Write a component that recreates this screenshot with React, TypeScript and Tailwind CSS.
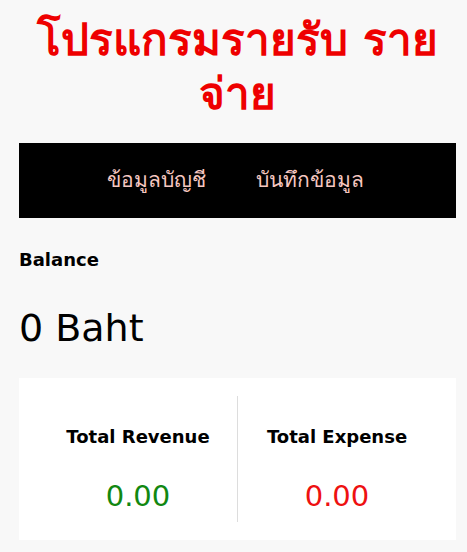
export default function App() {
  return (
    <div className="min-h-[552px] w-full bg-[#f8f8f8] font-['DejaVu_Sans','Noto_Sans',sans-serif]">
      <div className="ml-[19px] w-[437px] pt-[13px]">
        <h1 className="text-center text-[44px] font-bold leading-[54px] text-[#ee0000]">
          โปรแกรมรายรับ รายจ่าย
        </h1>

        <nav className="mt-[22px] flex h-[75px] items-center justify-center gap-[50px] bg-black pr-[4px] text-[21px] text-[#f6c7c0]">
          <a href="#">ข้อมูลบัญชี</a>
          <a href="#">บันทึกข้อมูล</a>
        </nav>

        <p className="mt-[30px] text-[18px] font-bold leading-[24px] text-black">Balance</p>
        <p className="mt-[34px] text-[38px] leading-[44px] text-black">0 Baht</p>

        <div className="mt-[28px] flex h-[162px] items-center bg-white px-[20px]">
          <div className="flex h-[126px] flex-1 flex-col items-center gap-[29px] border-r border-[#dddddd] pt-[29px]">
            <p className="text-[18px] font-bold leading-[24px] text-black">Total Revenue</p>
            <p className="text-[29px] leading-[36px] text-[#118811]">0.00</p>
          </div>
          <div className="flex h-[126px] flex-1 flex-col items-center gap-[29px] pt-[29px]">
            <p className="text-[18px] font-bold leading-[24px] text-black">Total Expense</p>
            <p className="text-[29px] leading-[36px] text-[#ee1111]">0.00</p>
          </div>
        </div>
      </div>
    </div>
  );
}
